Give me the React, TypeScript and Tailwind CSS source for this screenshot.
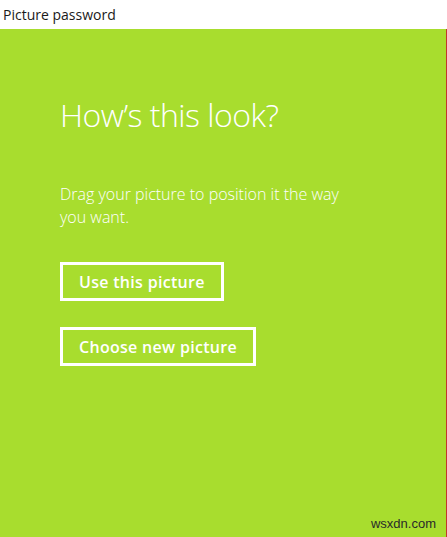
export default function App() {
  return (
    <div
      className="flex h-[537px] w-[447px] flex-col overflow-hidden bg-white"
      style={{ fontFamily: '"Open Sans", "Noto Sans", sans-serif' }}
    >
      <div className="flex h-[29px] shrink-0 items-center pl-[3px] text-[14px] leading-none text-[#1a1a1a]">
        Picture password
      </div>
      <div className="relative flex flex-1 flex-col border-r border-[#c0392b] bg-[#a8dd2e] pl-[60px] pt-[66px] text-white">
        <h1 className="text-[32px] font-light leading-[40px] tracking-[-0.5px]">How’s this look?</h1>
        <p className="mt-[48px] w-[300px] text-[16px] font-light leading-[23px]">
          Drag your picture to position it the way you want.
        </p>
        <div className="mt-[33px] flex flex-col items-start gap-[26px]">
          <button className="h-[39px] border-[3px] border-white px-[16px] text-[16px] font-semibold leading-none tracking-[0.3px] text-white">
            Use this picture
          </button>
          <button className="h-[39px] border-[3px] border-white px-[16px] text-[16px] font-semibold leading-none tracking-[0.3px] text-white">
            Choose new picture
          </button>
        </div>
        <span
          className="absolute bottom-[4px] right-[10px] text-[13px] text-[#2a2a2a]"
          style={{ fontFamily: '"Liberation Sans", Arial, sans-serif' }}
        >
          wsxdn.com
        </span>
      </div>
    </div>
  );
}
